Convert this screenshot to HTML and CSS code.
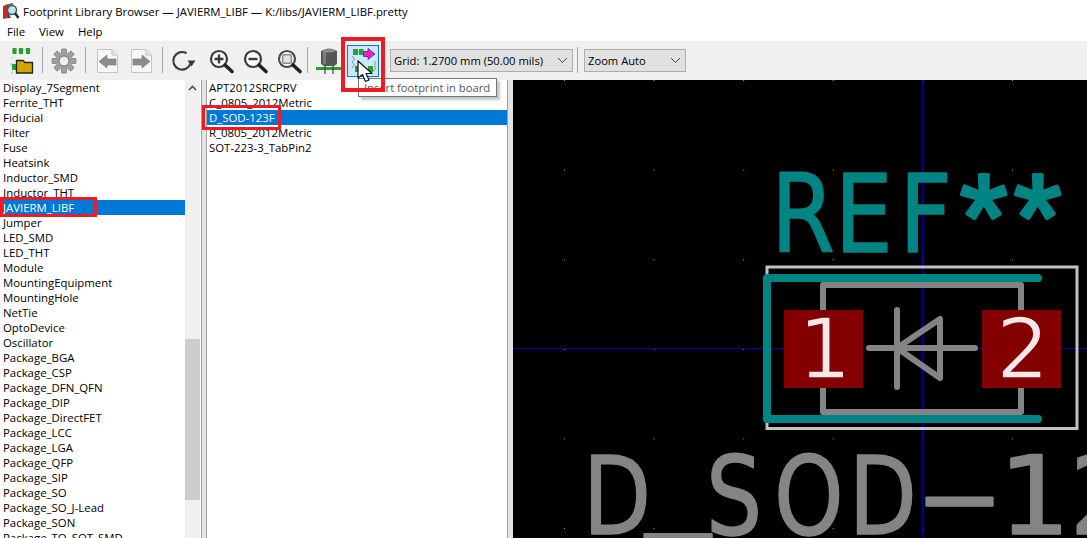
FILE: index.html

```html
<!DOCTYPE html>
<html lang="en">
<head>
    <meta charset="UTF-8">
    <title>Footprint Library Browser</title>
    <link rel="stylesheet" href="styles.css">
</head>
<body>
<div class="app">
    <div class="titlebar">
        <svg class="title-icon" width="18" height="18" viewBox="0 0 18 18">
            <path d="M1 4 L6 2 L6 16 L1 17 Z" fill="#c62828"/>
            <path d="M6 2 L11 1 L11 6 L6 10 Z" fill="#4f7f3f"/>
            <path d="M6 10 L9 16 L6 16 Z" fill="#8e2b2b"/>
            <circle cx="10" cy="8" r="4.5" fill="#bfe3ea" stroke="#2c5f6b" stroke-width="1.5"/>
            <path d="M13 11 L16.5 16" stroke="#222" stroke-width="2.4"/>
        </svg>
        <span>Footprint Library Browser — JAVIERM_LIBF — K:/libs/JAVIERM_LIBF.pretty</span>
    </div>
    <div class="menubar">
        <span class="menu-file">File</span>
        <span class="menu-view">View</span>
        <span class="menu-help">Help</span>
    </div>
    <div class="toolbar">
        <div class="tool">
            <svg width="32" height="32" viewBox="0 0 32 32">
                <path d="M8 7 V5 H26 M7 12 V14 M6 18 V21 M7 26 V29" fill="none" stroke="#b5b5b5" stroke-width="1"/>
                <rect x="7.5" y="3" width="4" height="6" fill="#1fa52b"/>
                <rect x="14" y="3" width="4" height="6" fill="#1fa52b"/>
                <rect x="21" y="3" width="4" height="6" fill="#1fa52b"/>
                <rect x="7" y="19" width="4.5" height="6" fill="#1fa52b"/>
                <path d="M11.5 28 V15.5 H18 L20 17.5 H27.5 V28 Z" fill="#d4a500" stroke="#222" stroke-width="1.3"/>
            </svg>
        </div>
        <div class="sep"></div>
        <div class="tool">
            <svg width="32" height="32" viewBox="0 0 32 32">
                <g fill="#a0a0a0" stroke="#6f6f6f" stroke-width="0.7">
                    <rect x="13.5" y="4" width="5" height="24" rx="0.8"/>
                    <rect x="13.5" y="4" width="5" height="24" rx="0.8" transform="rotate(45 16 16)"/>
                    <rect x="13.5" y="4" width="5" height="24" rx="0.8" transform="rotate(90 16 16)"/>
                    <rect x="13.5" y="4" width="5" height="24" rx="0.8" transform="rotate(135 16 16)"/>
                </g>
                <circle cx="16" cy="16" r="8.5" fill="#a0a0a0"/>
                <circle cx="16" cy="16" r="5" fill="#f0f0f0" stroke="#6f6f6f"/>
            </svg>
        </div>
        <div class="sep"></div>
        <div class="tool">
            <svg width="32" height="32" viewBox="0 0 32 32">
                <path d="M6.5 4.5 H21 L26.5 10 V27.5 H6.5 Z" fill="#f7f7f7" stroke="#c4c4c4"/>
                <path d="M21 4.5 V10 H26.5" fill="#e4e4e4" stroke="#c4c4c4"/>
                <path d="M8 16.5 L16 10 V14 H25 V20 H16 V23 Z" fill="#8c8c8c" stroke="#777" stroke-width="0.6"/>
            </svg>
        </div>
        <div class="tool tool-tight">
            <svg width="32" height="32" viewBox="0 0 32 32">
                <path d="M6.5 4.5 H21 L26.5 10 V27.5 H6.5 Z" fill="#f7f7f7" stroke="#c4c4c4"/>
                <path d="M21 4.5 V10 H26.5" fill="#e4e4e4" stroke="#c4c4c4"/>
                <path d="M25 16.5 L17 10 V14 H8 V20 H17 V23 Z" fill="#8c8c8c" stroke="#777" stroke-width="0.6"/>
            </svg>
        </div>
        <div class="sep"></div>
        <div class="tool">
            <svg width="32" height="32" viewBox="0 0 32 32">
                <path d="M22.5 18.5 A8.8 8.8 0 1 1 18.5 8.2" fill="none" stroke="#3c3c3c" stroke-width="2.2"/>
                <path d="M19.5 15.5 H27.5 L23.5 21.5 Z" fill="#3c3c3c"/>
            </svg>
        </div>
        <div class="tool tool-wide">
            <svg width="32" height="32" viewBox="0 0 32 32">
                <circle cx="14" cy="14" r="8" fill="#fbfbfb" stroke="#3a3a3a" stroke-width="2.2"/>
                <path d="M14 9.5 V18.5 M9.5 14 H18.5" stroke="#3a3a3a" stroke-width="2.4"/>
                <path d="M20 20 L27 26.5" stroke="#222" stroke-width="3.6" stroke-linecap="round"/>
            </svg>
        </div>
        <div class="tool tool-tight">
            <svg width="32" height="32" viewBox="0 0 32 32">
                <circle cx="14" cy="14" r="8" fill="#fbfbfb" stroke="#3a3a3a" stroke-width="2.2"/>
                <path d="M9.5 14 H18.5" stroke="#3a3a3a" stroke-width="2.4"/>
                <path d="M20 20 L27 26.5" stroke="#222" stroke-width="3.6" stroke-linecap="round"/>
            </svg>
        </div>
        <div class="tool tool-tight">
            <svg width="32" height="32" viewBox="0 0 32 32">
                <circle cx="14" cy="14" r="8" fill="#fbfbfb" stroke="#4a4a4a" stroke-width="2.2"/>
                <rect x="9.7" y="9.7" width="8.6" height="8.6" rx="1" fill="#e2e2e2" stroke="#8a8a8a" stroke-width="1.4"/>
                <path d="M20 20 L27 26.5" stroke="#222" stroke-width="3.6" stroke-linecap="round"/>
            </svg>
        </div>
        <div class="sep sep-short"></div>
        <div class="tool">
            <svg width="32" height="32" viewBox="0 0 32 32">
                <path d="M9 6 Q17 1 25 6 V19 L22 21 H12 L9 19 Z" fill="#565656"/>
                <path d="M11 6 V19 H14 V5 Z" fill="#7d7d7d"/>
                <path d="M10 6 Q17 2 24 6 Q17 9 10 6 Z" fill="#8f8f8f"/>
                <rect x="4" y="22" width="25" height="3" fill="#2f9e2f"/>
                <path d="M13 21 V29 M21 21 V29" stroke="#444" stroke-width="1.2"/>
            </svg>
        </div>
        <div class="tool tool-near tool-hover">
            <svg width="30" height="30" viewBox="0 0 30 30">
                <path d="M7 6 H22 M27 15 V24 L24 26 M4 10 L6.5 13 L4 16 L6.5 19 L4 22 M13 26 H19" fill="none" stroke="#8f8f8f"/>
                <rect x="5" y="3" width="5" height="6" fill="#1fa52b"/>
                <rect x="11" y="3" width="4.5" height="6" fill="#1fa52b"/>
                <rect x="7" y="20" width="5" height="6" fill="#1fa52b"/>
                <rect x="20" y="20" width="5" height="6" fill="#1fa52b"/>
                <path d="M15.5 5.5 H20 V2.5 L27 8 L20 13.5 V10.5 H15.5 Z" fill="#f01bd8" stroke="#3a3a3a" stroke-width="0.8"/>
            </svg>
        </div>
        <div class="combo combo-grid">
            <span>Grid: 1.2700 mm (50.00 mils)</span>
            <svg class="chevron" width="11" height="7" viewBox="0 0 11 7"><path d="M1 1 L5.5 5.5 L10 1" fill="none" stroke="#444"/></svg>
        </div>
        <div class="sep sep-combo"></div>
        <div class="combo combo-zoom">
            <span>Zoom Auto</span>
            <svg class="chevron" width="11" height="7" viewBox="0 0 11 7"><path d="M1 1 L5.5 5.5 L10 1" fill="none" stroke="#444"/></svg>
        </div>
    </div>

    <div class="main">
        <div class="lib-panel">
            <ul class="list lib-list">
                <li>Display_7Segment</li>
                <li>Ferrite_THT</li>
                <li>Fiducial</li>
                <li>Filter</li>
                <li>Fuse</li>
                <li>Heatsink</li>
                <li>Inductor_SMD</li>
                <li>Inductor_THT</li>
                <li class="selected">JAVIERM_LIBF</li>
                <li>Jumper</li>
                <li>LED_SMD</li>
                <li>LED_THT</li>
                <li>Module</li>
                <li>MountingEquipment</li>
                <li>MountingHole</li>
                <li>NetTie</li>
                <li>OptoDevice</li>
                <li>Oscillator</li>
                <li>Package_BGA</li>
                <li>Package_CSP</li>
                <li>Package_DFN_QFN</li>
                <li>Package_DIP</li>
                <li>Package_DirectFET</li>
                <li>Package_LCC</li>
                <li>Package_LGA</li>
                <li>Package_QFP</li>
                <li>Package_SIP</li>
                <li>Package_SO</li>
                <li>Package_SO_J-Lead</li>
                <li>Package_SON</li>
                <li>Package_TO_SOT_SMD</li>
            </ul>
            <div class="scrollbar">
                <div class="scroll-up">
                    <svg width="9" height="6" viewBox="0 0 9 6"><path d="M1 5 L4.5 1.5 L8 5" fill="none" stroke="#505050" stroke-width="1.6"/></svg>
                </div>
                <div class="scroll-space-top"></div>
                <div class="scroll-thumb"></div>
            </div>
        </div>
        <div class="sash sash-first"></div>
        <div class="fp-panel">
            <ul class="list fp-list">
                <li>APT2012SRCPRV</li>
                <li>C_0805_2012Metric</li>
                <li class="selected">D_SOD-123F</li>
                <li>R_0805_2012Metric</li>
                <li>SOT-223-3_TabPin2</li>
            </ul>
        </div>
        <div class="sash"></div>
        <svg class="canvas" viewBox="513 80 574 458">
            <defs>
                <pattern id="griddots" patternUnits="userSpaceOnUse" x="564" y="80" width="89.6" height="89.6">
                    <rect width="1" height="1" fill="#9a9a9a"/>
                </pattern>
            </defs>
            <rect x="513" y="80" width="574" height="458" fill="#000"/>
            <rect x="513" y="80" width="574" height="458" fill="url(#griddots)"/>
            <path d="M922.5 80 V538 M513 348.5 H1087" stroke="#0000b0" stroke-width="1"/>

            <text class="ref-text" transform="scale(0.85 1)" y="252" x="907 982 1058">REF</text>
            <text class="ref-stars" y="259" x="960 1014">**</text>

            <rect x="767" y="267" width="310" height="161.5" fill="none" stroke="#c2c2c2" stroke-width="3"/>
            <rect x="823" y="285" width="198" height="127" fill="none" stroke="#848484" stroke-width="6" stroke-linejoin="round"/>
            <path d="M1038 278 H767 V419 H1038" fill="none" stroke="#008484" stroke-width="8" stroke-linecap="round" stroke-linejoin="round"/>
            <rect x="784" y="310" width="79" height="78" fill="#840000"/>
            <rect x="982" y="310" width="79" height="78" fill="#840000"/>
            <path d="M869 348 H975 M897 310 V387 M897 348 L940 319 V378 Z" fill="none" stroke="#848484" stroke-width="6" stroke-linecap="round" stroke-linejoin="round"/>

            <text class="pad-text" x="798" y="378">1</text>
            <text class="pad-text" x="996" y="378">2</text>

            <text class="value-text" transform="scale(0.82 1)"><tspan x="711" y="534">D</tspan><tspan class="value-under" x="787" y="507">_</tspan><tspan x="861 944 1035" y="534">SOD</tspan></text>
            <text class="value-text" x="915" y="531" textLength="89" lengthAdjust="spacingAndGlyphs">-</text>
            <text class="value-text" transform="scale(1.05 1)" x="951 1018" y="534">12</text>
        </svg>
    </div>

    <div class="tooltip">Insert footprint in board</div>
    <div class="mark mark-tool"></div>
    <div class="mark mark-lib"></div>
    <div class="mark mark-fp"></div>
    <svg class="cursor" width="18" height="24" viewBox="0 0 18 24">
        <path d="M1 1 V18 L5.5 14.5 L8.5 21.5 L12 20 L9 13.5 L15 13.5 Z" fill="#fff" stroke="#111" stroke-width="1.2" stroke-linejoin="round"/>
    </svg>
</div>
</body>
</html>
```

FILE: styles.css

```css
* { box-sizing: border-box; }
html, body { margin: 0; padding: 0; }
body { font-family: "Open Sans", Arial, sans-serif; font-size: 11.4px; color: #000; background: #fff; }

.app { position: relative; width: 1087px; height: 538px; overflow: hidden; }

.titlebar { height: 22px; display: flex; align-items: center; background: #fff; }
.title-icon { margin: 0 3px 0 2px; flex: none; }

.menubar { height: 19px; display: flex; align-items: center; background: #fff; }
.menu-file { margin-left: 7px; }
.menu-view { margin-left: 14px; }
.menu-help { margin-left: 14px; }

.toolbar { height: 39px; display: flex; align-items: flex-start; padding-left: 5px; background: #f0f0f0; }
.tool { width: 32px; height: 32px; margin-top: 4px; flex: none; display: flex; align-items: center; justify-content: center; }
.tool-near { margin-left: 3px; }
.tool-tight { margin-left: 2px; }
.tool-wide { margin-left: 5px; }
.tool-hover { background: #cce8ff; border: 1px solid #0078d7; }
.sep { width: 1px; height: 26px; margin: 6px 5px 0 5px; background: #a8a8a8; flex: none; }
.sep-short { margin-left: 2px; margin-right: 4px; }
.sep-combo { margin-left: 4px; margin-right: 6px; }

.combo { height: 23px; margin-top: 8px; display: flex; align-items: center; justify-content: space-between; padding: 0 4px 0 3px; background: #e1e1e1; border: 1px solid #adadad; font-size: 11.2px; flex: none; }
.combo-grid { width: 183px; margin-left: 11px; }
.combo-zoom { width: 102px; }

.main { height: 458px; display: flex; }
.lib-panel { width: 201px; display: flex; flex: none; background: #fff; }
.fp-panel { width: 300px; flex: none; background: #fff; }
.sash { width: 6px; flex: none; background: #e3e3e3; border-left: 1px solid #a0a0a0; }
.sash-first { border-right: 1px solid #a0a0a0; }
.canvas { width: 574px; height: 458px; flex: none; display: block; }

.list { list-style: none; margin: 0; padding: 0; }
.list li { height: 15px; line-height: 15px; white-space: nowrap; }
.list li.selected { background: #0078d7; color: #fff; }
.lib-list { width: 185px; flex: none; }
.lib-list li { padding-left: 3px; }
.fp-list li { padding-left: 2px; }

.scrollbar { width: 15px; flex: none; display: flex; flex-direction: column; background: #f0f0f0; }
.scroll-up { height: 16px; display: flex; align-items: center; justify-content: center; }
.scroll-space-top { height: 243px; }
.scroll-thumb { height: 161px; background: #cdcdcd; }

.ref-text { font-family: "DejaVu Sans", sans-serif; font-size: 108px; fill: #008484; stroke: #008484; stroke-width: 1.5; stroke-linejoin: round; }
.ref-stars { font-family: "Liberation Sans", sans-serif; font-size: 122px; fill: #008484; stroke: #008484; stroke-width: 4; stroke-linejoin: round; }
.pad-text { font-family: "DejaVu Sans", sans-serif; font-size: 84px; fill: #f2e8e8; stroke: #840000; stroke-width: 1.5; }
.value-text { font-family: "DejaVu Sans", sans-serif; font-size: 108px; fill: #848484; stroke: #848484; stroke-width: 1.5; stroke-linejoin: round; }
.value-under { font-size: 160px; }

/* tooltip and red boxes lie on top of the window */
.tooltip { position: absolute; left: 358px; top: 78px; width: 139px; height: 19px; padding-left: 5px; line-height: 17px; font-size: 11.2px; color: #575757; background: #fff; border: 1px solid #767676; box-shadow: 3px 3px 2px rgba(0, 0, 0, 0.22); }
.mark { position: absolute; border: 3px solid #ed1c24; }
.mark-tool { left: 341px; top: 37px; width: 44px; height: 55px; border-width: 4px; }
.mark-lib { left: 0; top: 197px; width: 97px; height: 20px; }
.mark-fp { left: 202px; top: 105px; width: 79px; height: 25px; }
.cursor { position: absolute; left: 357px; top: 60px; }
```
